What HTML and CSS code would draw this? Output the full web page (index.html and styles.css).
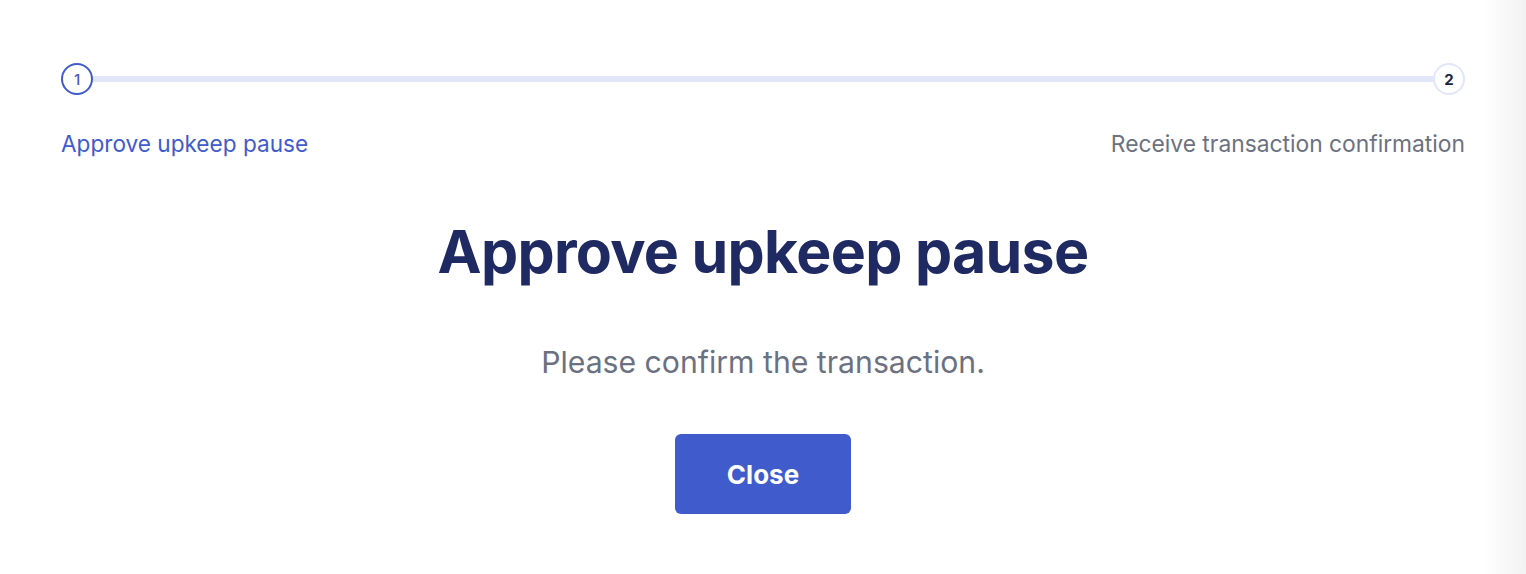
FILE: index.html
```html
<!DOCTYPE html>
<html lang="en">
<head>
<meta charset="utf-8">
<title>Approve upkeep pause</title>
<link rel="stylesheet" href="styles.css">
</head>
<body>
<div class="modal">
  <div class="stepper">
    <div class="track">
      <span class="dot dot-active">1</span>
      <span class="line"></span>
      <span class="dot dot-pending">2</span>
    </div>
    <div class="labels">
      <span class="label label-active">Approve upkeep pause</span>
      <span class="label label-pending">Receive transaction confirmation</span>
    </div>
  </div>
  <div class="content">
    <h1 class="title">Approve upkeep pause</h1>
    <p class="subtitle">Please confirm the transaction.</p>
    <button class="btn" type="button">Close</button>
  </div>
</div>
<div class="edge-shade"></div>
</body>
</html>
```

FILE: styles.css
```css
* { box-sizing: border-box; }
html, body { margin: 0; padding: 0; background: #ffffff; }
body {
  font-family: Inter, "Liberation Sans", Arial, sans-serif;
  width: 1526px;
  height: 574px;
  overflow: hidden;
}
.modal {
  padding: 63px 61px 0 61px;
}
.stepper { display: flex; flex-direction: column; }
.track {
  display: flex;
  align-items: center;
}
.dot {
  width: 32px;
  height: 32px;
  border-radius: 50%;
  display: flex;
  align-items: center;
  justify-content: center;
  font-size: 15px;
  font-weight: 600;
  background: #fff;
  flex: none;
}
.dot-active { border: 2px solid #3f5bcc; color: #3f5bcc; font-weight: 500; }
.dot-pending { border: 2px solid #e1e6f8; color: #1b2340; font-weight: 700; }
.line {
  flex: 1;
  height: 6px;
  background: #e1e6f8;
}
.labels {
  display: flex;
  justify-content: space-between;
  margin-top: 35px;
}
.label { font-size: 22.6px; line-height: 28px; }
.label-active { color: #3f5bcc; }
.label-pending { color: #6b7181; font-size: 22.8px; }
.content {
  display: flex;
  flex-direction: column;
  align-items: center;
}
.title {
  margin: 54px 0 0 0;
  font-size: 59px;
  line-height: 80px;
  font-weight: 700;
  color: #1f2a63;
  letter-spacing: -0.7px;
}
.subtitle {
  margin: 50px 0 0 0;
  font-size: 30.2px;
  line-height: 40px;
  color: #6b7181;
}
.btn {
  margin-top: 52px;
  width: 176px;
  height: 80px;
  border: none;
  border-radius: 6px;
  background: #3f5bcc;
  color: #fff;
  font-family: inherit;
  font-size: 26px;
  font-weight: 700;
}
.edge-shade {
  position: fixed;
  top: 0;
  right: 0;
  width: 44px;
  height: 574px;
  background: linear-gradient(to right, rgba(240,240,242,0), #f2f2f3);
  pointer-events: none;
}
```
